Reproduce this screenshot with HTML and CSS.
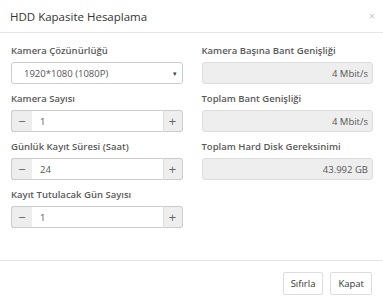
FILE: index.html
```html
<!DOCTYPE html>
<html lang="tr">
<head>
  <meta charset="UTF-8">
  <meta name="viewport" content="width=device-width, initial-scale=1.0">
  <title>HDD Kapasite Hesaplama</title>
  <link rel="stylesheet" href="styles.css">
</head>
<body>
  <div class="modal">
    <div class="modal-header">
      <h4 class="modal-title">HDD Kapasite Hesaplama</h4>
      <span class="close">&times;</span>
    </div>

    <div class="modal-body">
      <div class="col">
        <div class="form-group">
          <label>Kamera Çözünürlüğü</label>
          <div class="select">
            <span>1920*1080 (1080P)</span>
            <span class="caret">&#9662;</span>
          </div>
        </div>
        <div class="form-group">
          <label>Kamera Sayısı</label>
          <div class="input-group">
            <span class="addon minus">&minus;</span>
            <input type="text" value="1">
            <span class="addon plus">+</span>
          </div>
        </div>
        <div class="form-group">
          <label>Günlük Kayıt Süresi (Saat)</label>
          <div class="input-group">
            <span class="addon minus">&minus;</span>
            <input type="text" value="24">
            <span class="addon plus">+</span>
          </div>
        </div>
        <div class="form-group">
          <label>Kayıt Tutulacak Gün Sayısı</label>
          <div class="input-group">
            <span class="addon minus">&minus;</span>
            <input type="text" value="1">
            <span class="addon plus">+</span>
          </div>
        </div>
      </div>

      <div class="col">
        <div class="form-group">
          <label>Kamera Başına Bant Genişliği</label>
          <div class="readonly">4 Mbit/s</div>
        </div>
        <div class="form-group">
          <label>Toplam Bant Genişliği</label>
          <div class="readonly">4 Mbit/s</div>
        </div>
        <div class="form-group">
          <label>Toplam Hard Disk Gereksinimi</label>
          <div class="readonly">43.992 GB</div>
        </div>
      </div>
    </div>

    <div class="modal-footer">
      <button>Sıfırla</button>
      <button>Kapat</button>
    </div>
  </div>
</body>
</html>
```

FILE: styles.css
```css
body {
  margin: 0;
  font-family: "Open Sans", sans-serif;
  color: #555;
  background: #fff;
}

.modal {
  width: 383px;
}

.modal-header {
  height: 32px;
  padding: 0 8px 0 10px;
  display: flex;
  align-items: center;
  justify-content: space-between;
  border-bottom: 1px solid #e5e5e5;
}

.modal-title {
  margin: 0;
  font-size: 11.5px;
  font-weight: 400;
  color: #333;
}

.close {
  font-size: 11px;
  color: #c8c8c8;
  margin-top: -2px;
}

.modal-body {
  display: grid;
  grid-template-columns: minmax(0, 1fr) minmax(0, 1fr);
  column-gap: 19px;
  padding: 11px 10px 24px 11px;
}

.form-group {
  margin-bottom: 8px;
}

label {
  display: block;
  height: 14px;
  line-height: 14px;
  margin-bottom: 4px;
  font-size: 9.5px;
  font-weight: 600;
  color: #5a5a5a;
}

.select,
.input-group,
.readonly {
  height: 22px;
  box-sizing: border-box;
  font-size: 9.5px;
  color: #555;
}

.select {
  display: flex;
  align-items: center;
  justify-content: space-between;
  padding: 0 5px 0 12px;
  border: 1px solid #ccc;
  border-radius: 3px;
}

.caret {
  font-size: 7px;
  color: #444;
}

.input-group {
  display: flex;
}

.addon {
  display: flex;
  align-items: center;
  justify-content: center;
  background: #eee;
  border: 1px solid #ccc;
  color: #666;
  font-size: 13px;
}

.minus {
  width: 20px;
  border-radius: 3px 0 0 3px;
  border-right: none;
}

.plus {
  width: 18px;
  border-radius: 0 3px 3px 0;
  border-left: 1px solid #ddd;
}

.input-group input {
  flex: 1;
  width: 0;
  min-width: 0;
  height: 22px;
  box-sizing: border-box;
  margin: 0;
  padding: 0 8px;
  border: 1px solid #ccc;
  border-left: none;
  border-right: none;
  font-family: inherit;
  font-size: 9.5px;
  color: #555;
  outline: none;
}

.readonly {
  display: flex;
  align-items: center;
  justify-content: flex-end;
  padding: 0 4px;
  background: #eee;
  border: 1px solid #ddd;
  border-radius: 3px;
}

.modal-footer {
  display: flex;
  justify-content: flex-end;
  gap: 7px;
  padding: 11px 11px 5px;
  border-top: 1px solid #e5e5e5;
}

.modal-footer button {
  height: 23px;
  padding: 0 7px;
  background: #fff;
  border: 1px solid #ddd;
  border-radius: 2px;
  font-family: inherit;
  font-size: 9.5px;
  color: #333;
}
```
